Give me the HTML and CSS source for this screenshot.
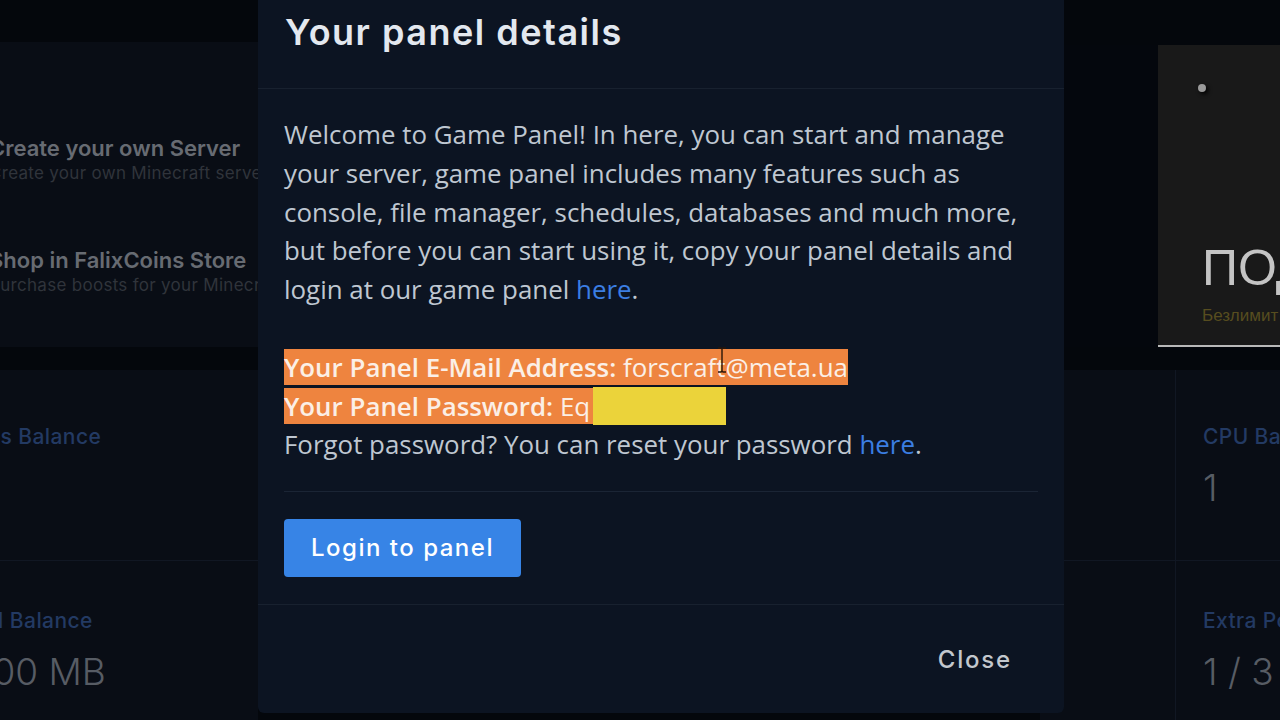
FILE: index.html
```html
<!DOCTYPE html>
<html lang="en">
<head>
    <meta charset="UTF-8">
    <meta name="viewport" content="width=device-width, initial-scale=1.0">
    <title>Your panel details</title>
    <link rel="stylesheet" href="styles.css">
</head>
<body>
    <div class="backdrop">
        <aside class="side side-left">
            <div class="topbar"></div>
            <div class="card links">
                <div class="link-item">
                    <div class="link-title">Create your own Server</div>
                    <div class="link-sub">Create your own Minecraft server for free</div>
                </div>
                <div class="link-item">
                    <div class="link-title">Shop in FalixCoins Store</div>
                    <div class="link-sub">Purchase boosts for your Minecraft server</div>
                </div>
            </div>
            <div class="card stats">
                <div class="stat coins">
                    <div class="stat-label">Coins Balance</div>
                </div>
                <div class="stat ram">
                    <div class="stat-label">RAM Balance</div>
                    <div class="stat-value">1000 MB</div>
                </div>
            </div>
        </aside>

        <aside class="side side-right">
            <div class="topbar"></div>
            <div class="promo-row">
                <div class="promo-gap"></div>
                <div class="promo">
                    <div class="promo-dot"></div>
                    <div class="promo-big">ПОДПИСКА</div>
                    <div class="promo-sub">Безлимит</div>
                </div>
            </div>
            <div class="card stats stats-grid">
                <div class="stat"></div>
                <div class="stat">
                    <div class="stat-label">CPU Balance</div>
                    <div class="stat-value">1</div>
                </div>
                <div class="stat"></div>
                <div class="stat">
                    <div class="stat-label">Extra Ports</div>
                    <div class="stat-value">1 / 3</div>
                </div>
            </div>
        </aside>
    </div>

    <div class="overlay">
        <div class="modal">
            <div class="modal-header">
                <h2>Your panel details</h2>
            </div>
            <div class="modal-body">
                <p>Welcome to Game Panel! In here, you can start and manage your server, game panel includes many features such as console, file manager, schedules, databases and much more, but before you can start using it, copy your panel details and login at our game panel <a href="#">here</a>.</p>
                <p>
                    <span class="hl"><b>Your Panel E-Mail Address:</b> forscraf<span class="caret"><svg width="10" height="26" viewBox="0 0 10 26"><path d="M1 1h3l1 1 1-1h3M5 2v22M1 25h3l1-1 1 1h3" fill="none" stroke="#2a1608" stroke-width="1.4"/></svg></span>t@meta.ua</span><br>
                    <span class="hl"><b>Your Panel Password:</b> Eq<span class="censor"></span></span><br>
                    Forgot password? You can reset your password <a href="#">here</a>.
                </p>
                <hr>
                <button class="btn-login">Login to panel</button>
            </div>
            <div class="modal-footer">
                <button class="btn-close">Close</button>
            </div>
        </div>
    </div>
</body>
</html>
```

FILE: styles.css
```css
body {
    margin: 0;
    width: 1280px;
    height: 720px;
    overflow: hidden;
    background-color: #04070c;
    font-family: "Open Sans", sans-serif;
}

/* page behind the modal */
.backdrop {
    display: flex;
    justify-content: space-between;
    height: 720px;
}
.side {
    display: flex;
    flex-direction: column;
}
.side-left {
    width: 318px;
    margin-left: -60px;
    overflow: hidden;
}
.side-right {
    width: 260px;
    margin-right: -20px;
}
.topbar {
    flex: none;
    height: 42px;
}
.side-right .topbar {
    height: 45px;
}
.card {
    background-color: #090d15;
}
.links {
    height: 305px;
    padding: 92px 0 0 49px;
    box-sizing: border-box;
    font-family: Inter, sans-serif;
    white-space: nowrap;
}
.link-item {
    margin-bottom: 62px;
}
.link-title {
    font-size: 22px;
    font-weight: 600;
    line-height: 28px;
    color: #676b72;
}
.link-sub {
    font-size: 17px;
    line-height: 22px;
    letter-spacing: 0.3px;
    color: #30343b;
}

.stats {
    flex: 1;
    margin-top: 23px;
    display: grid;
    grid-template-rows: 190px 1fr;
    font-family: Inter, sans-serif;
    white-space: nowrap;
}
.stats .stat {
    padding: 54px 0 0 20px;
}
.stats .stat + .stat {
    border-top: 1px solid #111723;
    padding-top: 47px;
}
.stats .coins {
    padding-left: 13px;
}
.stats .ram {
    padding-left: 15px;
}
.stat-label {
    font-size: 21px;
    font-weight: 500;
    line-height: 26px;
    letter-spacing: 0.4px;
    color: #233a63;
}
.stat-value {
    margin-top: 16px;
    font-size: 37px;
    font-weight: 300;
    line-height: 44px;
    color: #575c64;
}

.stats-grid {
    grid-template-columns: 135px 1fr;
}
.stats-grid .stat:nth-child(2n) {
    border-left: 1px solid #111723;
    padding-left: 27px;
}
.stats-grid .stat:nth-child(-n+2) {
    border-top: none;
    padding-top: 54px;
}
.stats-grid .stat:nth-child(n+3) {
    border-top: 1px solid #111723;
    padding-top: 47px;
}

.promo-row {
    display: flex;
    height: 302px;
}
.promo-gap {
    width: 118px;
    background-color: #04070d;
}
.promo {
    flex: 1;
    overflow: hidden;
    white-space: nowrap;
    padding: 39px 0 0 44px;
    background-color: #191919;
    border-bottom: 2px solid #b9b9b9;
    font-family: "Liberation Sans", sans-serif;
}
.promo-dot {
    width: 8px;
    height: 8px;
    margin-left: -4px;
    border-radius: 50%;
    background-color: #9a9a9a;
    box-shadow: 2px 2px 4px #000;
}
.promo-big {
    margin-top: 148px;
    font-size: 50px;
    line-height: 56px;
    color: #c4c4c4;
}
.promo-sub {
    margin-top: 9px;
    font-size: 17px;
    line-height: 22px;
    color: #574d1f;
}

/* modal */
.overlay {
    position: fixed;
    top: 0;
    left: 0;
    right: 0;
    bottom: 0;
}
.modal {
    width: 806px;
    margin: -17px 0 0 258px;
    background-color: #0c1422;
    border-radius: 6px;
}
.modal-header {
    padding: 29px 27px 35px;
    border-bottom: 1px solid #18212f;
}
.modal-header h2 {
    margin: 0;
    font-family: Inter, sans-serif;
    font-size: 36px;
    font-weight: 600;
    line-height: 41px;
    letter-spacing: 1.5px;
    color: #e3e8ef;
}
.modal-body {
    padding: 26px 26px 27px;
    font-size: 25.9px;
    line-height: 38.8px;
    color: #bfc7d1;
}
.modal-body p {
    margin: 0 0 38.8px;
}
.modal-body p:last-of-type {
    margin-bottom: 0;
}
.modal-body a {
    color: #3b7ee2;
    text-decoration: none;
}
.hl {
    background-color: #ee843f;
    color: #fbefe6;
}
.hl b {
    font-weight: 600;
}
.caret {
    position: relative;
}
.caret svg {
    position: absolute;
    left: 1px;
    top: -2px;
}
.censor {
    display: inline-block;
    width: 133px;
    height: 38px;
    margin-left: 3px;
    vertical-align: top;
    background-color: #ebd33a;
}
.modal-body hr {
    margin: 27px 0;
    border: none;
    border-top: 1px solid #1b2535;
}
.btn-login {
    padding: 14px 27px;
    border: none;
    border-radius: 4px;
    background-color: #3784e6;
    color: #fff;
    font-family: Inter, sans-serif;
    font-size: 24px;
    font-weight: 500;
    line-height: 30px;
    letter-spacing: 1.5px;
    cursor: pointer;
}
.modal-footer {
    display: flex;
    justify-content: flex-end;
    padding: 27px 26px 25px;
    border-top: 1px solid #18212f;
}
.btn-close {
    padding: 13px 26px;
    border: none;
    background: none;
    color: #c3c7cd;
    font-family: Inter, sans-serif;
    font-size: 24px;
    font-weight: 500;
    line-height: 30px;
    letter-spacing: 1.8px;
    cursor: pointer;
}
```
